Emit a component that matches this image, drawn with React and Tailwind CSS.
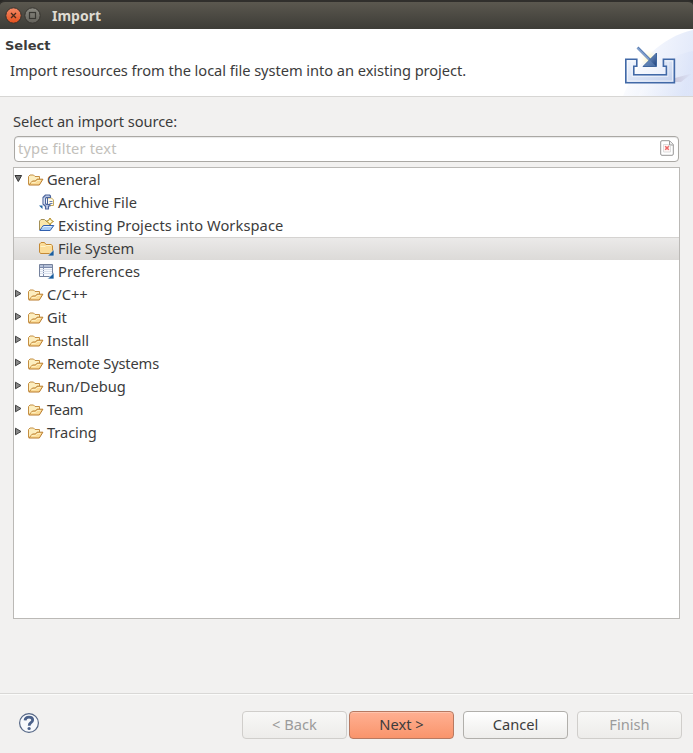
import React from "react";

function OpenFolder() {
  return (
    <svg width="16" height="16" viewBox="0 0 16 16" className="shrink-0">
      <path d="M.5 12.500V4.500L2 3h3.500L7 4.500h4.500V7" fill="#fdeebf" stroke="#c58f42" />
      <path d="M.8 13L4.500 9h3L9 7.200h5.900L11.300 13z" fill="#fbdc98" stroke="#b97b2b" strokeLinejoin="round" />
      <path d="M3.500 10.500h4.200L9.500 8.500h3" fill="none" stroke="#fff0c0" />
    </svg>
  );
}

function ArchiveIcon() {
  return (
    <svg width="16" height="16" viewBox="0 0 16 16" className="shrink-0">
      <path d="M0 11.500h3.500V15z" fill="#1e64a5" />
      <path d="M8.500 4h4l2 2v5.500h-6z" fill="#fffbe8" stroke="#c5a95c" />
      <path d="M10.500 7.500h3M10.500 9.500h3" stroke="#6b80b2" />
      <path
        d="M11.500 3.500V2L10.500 1h-4L4 3.500v6.500l2 2h.500v3h3v-3h1.500v-1.500H7.500L6.500 9.500V4.500l1-1z"
        fill="#b9c6e2"
        stroke="#4c659c"
        strokeWidth="1.100"
        strokeLinejoin="round"
      />
      <path d="M8.500 4v7" stroke="#4c659c" />
      <path d="M5.200 4v6" stroke="#eef2fb" strokeWidth=".8" />
    </svg>
  );
}

function ProjectsIcon() {
  return (
    <svg width="16" height="16" viewBox="0 0 16 16" className="shrink-0">
      <path d="M.5 13V4L2 2.500h3.500L7 4h4.500v5" fill="#fae7ab" stroke="#a39058" />
      <path d="M.8 13.500L4.300 8.500h10.500l-3.600 5z" fill="#a9cdf7" stroke="#315fae" strokeLinejoin="round" />
      <path d="M3.500 11l1.500-1.500h7.500" fill="none" stroke="#e4f1ff" />
      <path d="M11 1l1.300 2.200 2.200 1.300-2.200 1.300L11 8 9.700 5.800 7.500 4.500l2.200-1.300z" fill="#fff099" stroke="#b28b2c" />
      <path d="M11 3v3M9.500 4.500h3" stroke="#fffbdc" />
    </svg>
  );
}

function FileSystemIcon() {
  return (
    <svg width="16" height="16" viewBox="0 0 16 16" className="shrink-0">
      <path d="M1.500 13.500l-1-1.500V4L2 2.500h3.500L7 4.500h5l1.500 1.200v6.800l-1 1z" fill="#fbdc98" stroke="#c58a35" />
      <path d="M1.500 6.500h4.800l1-1h5" fill="none" stroke="#fff3c8" />
      <path d="M15 9.500V16H8.500z" fill="#1b5e9f" stroke="#f0efed" strokeWidth=".7" />
    </svg>
  );
}

function PreferencesIcon() {
  return (
    <svg width="16" height="16" viewBox="0 0 16 16" className="shrink-0">
      <path d="M.5 1.500h13v12H.5z" fill="#f8fafe" stroke="#75829d" />
      <path d="M1 2h12v2H1z" fill="#b4c0d8" />
      <path d="M1 4.500h12M4.500 2v11" stroke="#7d8cad" />
      <path d="M1 6.500h12M1 8.500h12M1 10.500h12" stroke="#d9e0ec" />
      <path d="M15 9.500V16H8.500z" fill="#1b5e9f" stroke="#fff" strokeWidth=".7" />
    </svg>
  );
}

function Expander({ open }) {
  return (
    <svg width="9" height="9" viewBox="0 0 9 9" className="mb-[3px] shrink-0">
      {open ? (
        <path d="M1 1.5h6.6L4.3 7.5z" fill="#777" stroke="#333" />
      ) : (
        <path d="M1.5 1.200v6.600L7 4.500z" fill="#888" stroke="#444" />
      )}
    </svg>
  );
}

const children = [
  { label: "Archive File", Icon: ArchiveIcon, tracking: "tracking-[0.1px]" },
  { label: "Existing Projects into Workspace", Icon: ProjectsIcon, tracking: "tracking-[0.08px]" },
  { label: "File System", Icon: FileSystemIcon, selected: true, tracking: "tracking-[-0.08px]" },
  { label: "Preferences", Icon: PreferencesIcon, tracking: "tracking-[0.04px]" },
];

const groups = [
  { label: "C/C++", tracking: "tracking-[0px]" },
  { label: "Git", tracking: "tracking-[0px]" },
  { label: "Install", tracking: "tracking-[0px]" },
  { label: "Remote Systems", tracking: "tracking-[-0.15px]" },
  { label: "Run/Debug", tracking: "tracking-[0px]" },
  { label: "Team", tracking: "tracking-[-0.25px]" },
  { label: "Tracing", tracking: "tracking-[-0.08px]" },
];

function GroupRow({ label, tracking, open = false }) {
  return (
    <div className="flex h-[23px] items-center">
      <Expander open={open} />
      <span className="ml-[5px] flex w-[19px] shrink-0">
        <OpenFolder />
      </span>
      <span className={"pb-[2px] " + tracking}>{label}</span>
    </div>
  );
}

function ChildRow({ label, Icon, selected, tracking }) {
  return (
    <div
      className={
        "flex h-[23px] items-center pl-[25px] " +
        (selected ? "border-t border-[#d5d3d1] bg-linear-to-b from-[#ebeae9] to-[#dcdad8]" : "")
      }
    >
      <span className="flex w-[19px] shrink-0 pb-[2px]">
        <Icon />
      </span>
      <span className={"pb-[2px] " + tracking}>{label}</span>
    </div>
  );
}

function WizardBanner() {
  return (
    <svg width="75" height="67" viewBox="0 0 75 67" className="shrink-0">
      <defs>
        <linearGradient id="swoosh" x1="0" y1="0" x2="1" y2="0.2">
          <stop offset="0" stopColor="#fff" />
          <stop offset="1" stopColor="#d9e2f8" />
        </linearGradient>
        <linearGradient id="tray" x1="0" y1="0" x2="1" y2="1">
          <stop offset="0" stopColor="#f2f7ff" />
          <stop offset="1" stopColor="#c1cfec" />
        </linearGradient>
        <linearGradient id="arrow" x1="0" y1="0" x2="1" y2="1">
          <stop offset="0" stopColor="#9eb9df" />
          <stop offset="1" stopColor="#183e7c" />
        </linearGradient>
        <radialGradient id="glow">
          <stop offset="0" stopColor="#fff6b8" />
          <stop offset="1" stopColor="#fff" stopOpacity="0" />
        </radialGradient>
        <linearGradient id="shade" x1="0" x2="1">
          <stop offset="0" stopColor="#c3bdd2" />
          <stop offset="1" stopColor="#dbe3f7" />
        </linearGradient>
      </defs>
      <path d="M5 67C18 34 43 8 75 1v66z" fill="url(#swoosh)" opacity=".7" />
      <path d="M20 67C32 40 53 26 75 22v45z" fill="url(#swoosh)" opacity=".65" />
      <path d="M57 53V49L74 44.500L63 53z" fill="url(#shade)" opacity=".7" />
      <circle cx="31" cy="30" r="11" fill="url(#glow)" />
      <path
        d="M7.800 30.300h11v7h-3v8.400h32.600v-8.400h-3v-7h11v23.500H7.800z"
        fill="url(#tray)"
        stroke="#4169a7"
        strokeWidth="1.600"
      />
      <path
        d="M9.600 52V32h7.500M47 32h7.600v20H10"
        fill="none"
        stroke="#fff"
        strokeWidth="1"
        opacity=".6"
      />
      <path d="M14 33v14.500h36V33" fill="none" stroke="#fff" strokeWidth="1" opacity=".45" />
      <path d="M19.500 18.500L32 31" stroke="#5c80b5" strokeWidth="2.600" />
      <path d="M19.500 19L32 31.500" stroke="#a3bcdf" strokeWidth="1" />
      <path d="M38.500 24v13.500H25z" fill="url(#arrow)" stroke="#3e659d" />
      <path d="M38 37L31.500 31 26 37z" fill="#6688ba" opacity=".6" />
    </svg>
  );
}

function ClearIcon() {
  return (
    <svg width="14" height="16" viewBox="0 0 14 16" className="mb-[2px]">
      <path d="M2 .7h7.500L13.300 4.500V14q0 1.300-1.300 1.300H2Q.7 15.300.7 14V2Q.7.7 2 .7z" fill="#fff" stroke="#989797" />
      <path d="M9.500 1v4H13" fill="#eee" stroke="#999" />
      <path d="M3.500 4.500h5v1.500h2v6h-7z" fill="#fff6f5" stroke="#ddd" />
      <path d="M5.200 6.200l3.600 3.600M8.800 6.200l-3.600 3.600" stroke="#ee6666" strokeWidth="1.500" />
    </svg>
  );
}

const buttonBase = "flex h-7 w-[105px] items-center justify-center rounded-[4px] border pb-[3px]";

export default function App() {
  return (
    <div className="flex h-[753px] w-[693px] flex-col overflow-hidden bg-[#f2f1f0] font-['Noto_Sans',sans-serif] text-[14.67px] leading-[22px] whitespace-nowrap text-[#3c3c3c]">
      <header className="h-[29px] shrink-0 bg-[#292825]">
        <div className="flex h-full items-center rounded-t-[5px] border-t-2 border-t-[#302f2c] bg-linear-to-b from-[#5b584f] to-[#3d3c37] pl-[5px]">
          <svg width="38" height="20" viewBox="0 0 38 20" className="mt-px">
            <defs>
              <linearGradient id="close" x1="0" y1="0" x2="0" y2="1">
                <stop offset="0" stopColor="#f58b68" />
                <stop offset="1" stopColor="#e44f1b" />
              </linearGradient>
              <linearGradient id="max" x1="0" y1="0" x2="0" y2="1">
                <stop offset="0" stopColor="#8b8a82" />
                <stop offset="1" stopColor="#64625b" />
              </linearGradient>
            </defs>
            <circle cx="8.5" cy="9.5" r="7.7" fill="url(#close)" stroke="#35312c" />
            <path d="M6 7l5 5M11 7l-5 5" stroke="#472a1d" strokeWidth="1.300" />
            <circle cx="27.500" cy="9.500" r="7.700" fill="url(#max)" stroke="#36342f" />
            <rect x="24.500" y="6.500" width="6" height="6" fill="none" stroke="#383732" strokeWidth="1.200" />
          </svg>
          <h1 className="ml-[9px] text-[14px] font-bold text-[#dfdbd2]">Import</h1>
        </div>
      </header>

      <section className="flex h-[68px] shrink-0 justify-between border-b border-[#d7d6d4] bg-white">
        <div className="pt-[7px] pl-[5px]">
          <h2 className="font-['DejaVu_Sans',sans-serif] text-[13px] leading-5 font-bold">Select</h2>
          <p className="mt-[3px] ml-[5px] tracking-[-0.06px]">
            Import resources from the local file system into an existing project.
          </p>
        </div>
        <WizardBanner />
      </section>

      <main className="flex grow flex-col border-b border-[#d9d8d6] px-[13px] pt-[13px] pb-[74px]">
        <label className="tracking-[-0.08px]">Select an import source:</label>
        <div className="mt-1 mr-px ml-px flex h-[26px] items-center justify-between rounded-[4px] border border-[#aaa8a4] bg-white pr-[4px] pl-[3px] shadow-[inset_0_1px_1px_#e8e8e8]">
          <span className="pb-[2px] tracking-[0.15px] text-[#c2bfbb]">type filter text</span>
          <ClearIcon />
        </div>
        <div className="mt-[5px] grow border border-[#bbb9b6] bg-white">
          <GroupRow label="General" tracking="tracking-[-0.1px]" open />
          {children.map((row) => (
            <ChildRow key={row.label} {...row} />
          ))}
          {groups.map((row) => (
            <GroupRow key={row.label} {...row} />
          ))}
        </div>
      </main>

      <footer className="flex h-[59px] shrink-0 items-start border-t border-[#fbfbfa] pt-4 pr-[11px] pl-[18px]">
        <svg width="22" height="22" viewBox="0 0 22 22" className="mt-[1px]">
          <circle cx="11" cy="11" r="9.4" fill="#f7f9fc" stroke="#546685" strokeWidth="1.2" />
          <path
            d="M7.100 8.400Q7.300 5.200 11 5.200t3.700 2.900Q14.700 9.600 12.800 10.700 11.200 11.700 11.200 13.800"
            fill="none"
            stroke="#4b618a"
            strokeWidth="2.800"
          />
          <circle cx="11.100" cy="16.500" r="1.600" fill="#4b618a" />
        </svg>
        <div className="ml-auto flex">
          <button className={buttonBase + " border-[#d0cecb] bg-linear-to-b from-[#f8f8f7] to-[#edecea] text-[#9b9b9b]"}>
            &lt; Back
          </button>
          <button className={buttonBase + " ml-[2px] border-[#b77961] bg-linear-to-b from-[#ffb092] to-[#f9946b] shadow-[inset_0_1px_0_#ffc4ad]"}>
            Next &gt;
          </button>
          <button className={buttonBase + " ml-[9px] border-[#b1afab] bg-linear-to-b from-white to-[#eeedeb]"}>Cancel</button>
          <button className={buttonBase + " ml-[9px] border-[#d0cecb] bg-linear-to-b from-[#f8f8f7] to-[#edecea] text-[#9b9b9b]"}>
            Finish
          </button>
        </div>
      </footer>
    </div>
  );
}
